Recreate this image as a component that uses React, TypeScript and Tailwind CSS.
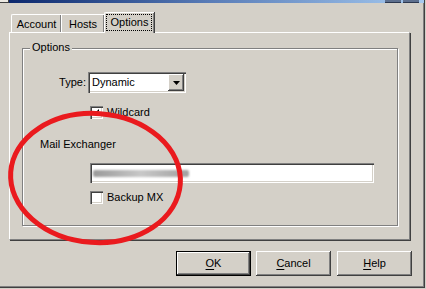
import React from "react";

const sunken =
  "shadow-[inset_1px_1px_0_#808080,inset_2px_2px_0_#404040,inset_-1px_-1px_0_#ffffff,inset_-2px_-2px_0_#d4d0c8]";
const raised =
  "shadow-[inset_-1px_-1px_0_#404040,inset_1px_1px_0_#ffffff,inset_-2px_-2px_0_#808080,inset_2px_2px_0_#d4d0c8]";

function CheckBox({ checked }: { checked?: boolean }) {
  return (
    <div
      className={`flex h-[13px] w-[13px] shrink-0 items-center justify-center bg-white ${sunken}`}
    >
      {checked && (
        <svg width="7" height="7" viewBox="0 0 7 7">
          <path d="M0 2 L2 4 L6 0 L6 2 L2 6 L0 4 Z" fill="#000" />
        </svg>
      )}
    </div>
  );
}

function Button({
  label,
  hot,
  isDefault,
  className = "",
}: {
  label: string;
  hot: string;
  isDefault?: boolean;
  className?: string;
}) {
  const rest = label.slice(hot.length);
  return (
    <div
      className={`flex h-[25px] w-[75px] items-center justify-center ${
        isDefault ? "border border-black" : ""
      } ${className}`}
    >
      <div
        className={`flex h-full w-full items-center justify-center ${raised}`}
      >
        <span>
          <span className="underline underline-offset-[2px]">{hot}</span>
          {rest}
        </span>
      </div>
    </div>
  );
}

export default function App() {
  return (
    <div className="relative h-[289px] w-[426px] overflow-hidden bg-[#d4d0c8] font-['Liberation_Sans',Arial,sans-serif] text-[11px] leading-[13px] text-black">
      <div className="flex h-[288px] w-[425px] flex-col border-r border-b border-[#404040] shadow-[inset_-1px_-1px_0_#808080]">
        {/* title bar remnant */}
        <div className="flex h-[3px] w-[424px] bg-gradient-to-r from-[#0a246a] via-[#5a7db8] to-[#a6caf0]">
          <div className="h-[3px] w-[9px] border-r border-b border-[#404040] bg-[#ece9e2]" />
          <div className="flex-1" />
          <div className="h-[3px] w-[16px] border-b border-[#2c3850] bg-[#5d6f8e]" />
          <div className="ml-[2px] h-[3px] w-[16px] border-b border-[#2c3850] bg-[#5d6f8e]" />
          <div className="w-[5px]" />
        </div>

        {/* tabs */}
        <div className="relative z-10 ml-[11px] mt-[9px] flex h-[20px] items-end">
          <div className="flex h-[18px] w-[50px] justify-center rounded-tl-[2px] border-t border-l border-white pt-[3px] shadow-[inset_-1px_0_0_#808080,1px_0_0_#404040]">
            Account
          </div>
          <div className="flex h-[18px] w-[43px] justify-center border-t border-l border-white pt-[3px] shadow-[inset_-1px_0_0_#808080]">
            Hosts
          </div>
          <div className="relative -mb-[1px] flex h-[21px] w-[50px] justify-center rounded-tl-[2px] border-t border-l border-white bg-[#d4d0c8] pt-[3px] shadow-[inset_-1px_0_0_#808080,1px_0_0_#404040]">
            Options
            <div className="absolute top-[1px] right-[2px] bottom-[2px] left-[1px] border border-dotted border-black" />
          </div>
        </div>

        {/* tab panel */}
        <div className="ml-[9px] h-[208px] w-[401px] border-t border-l border-white border-r-[#808080] border-b-[#808080] border-r border-b shadow-[1px_1px_0_#404040]">
          <div className="relative ml-[12px] mt-[15px] h-[178px] w-[376px] border border-[#808080] shadow-[inset_1px_1px_0_#ffffff,1px_1px_0_#ffffff]">
            <div className="absolute -top-[8px] left-[7px] bg-[#d4d0c8] px-[2px]">
              Options
            </div>

            <div className="mt-[23px] flex items-center">
              <div className="w-[65px] pr-[2px] text-right">Type:</div>
              <div
                className={`flex h-[21px] w-[98px] items-center justify-between bg-white p-[2px] ${sunken}`}
              >
                <span className="pl-[2px]">Dynamic</span>
                <div
                  className={`flex h-[17px] w-[16px] items-center justify-center bg-[#d4d0c8] ${raised}`}
                >
                  <svg width="7" height="4" viewBox="0 0 7 4">
                    <path d="M0 0 H7 L3.5 4 Z" fill="#000" />
                  </svg>
                </div>
              </div>
            </div>

            <div className="mt-[13px] ml-[67px] flex items-center gap-[4px]">
              <CheckBox checked />
              <span>Wildcard</span>
            </div>

            <div className="mt-[19px] ml-[17px]">Mail Exchanger</div>

            <div
              className={`mt-[12px] ml-[67px] flex h-[20px] w-[284px] items-center bg-white px-[3px] ${sunken}`}
            >
              <div className="h-[7px] w-[96px] rounded-[2px] bg-gradient-to-r from-[#9a9a9a] via-[#c8c8c8] to-[#a0a0a0] blur-[1px]" />
            </div>

            <div className="mt-[8px] ml-[67px] flex items-center gap-[4px]">
              <CheckBox />
              <span>Backup MX</span>
            </div>
          </div>
        </div>

        {/* buttons */}
        <div className="mt-[11px] ml-[176px] flex">
          <Button label="OK" hot="O" isDefault />
          <Button label="Cancel" hot="C" className="ml-[5px]" />
          <Button label="Help" hot="H" className="ml-[6px]" />
        </div>
      </div>

      {/* red annotation */}
      <svg
        className="pointer-events-none absolute top-0 left-0"
        width="426"
        height="289"
        viewBox="0 0 426 289"
      >
        <ellipse
          cx="95.5"
          cy="178"
          rx="85"
          ry="64.5"
          fill="none"
          stroke="#ea1a1e"
          strokeWidth="5"
          transform="rotate(4 95.5 178)"
        />
      </svg>
    </div>
  );
}
